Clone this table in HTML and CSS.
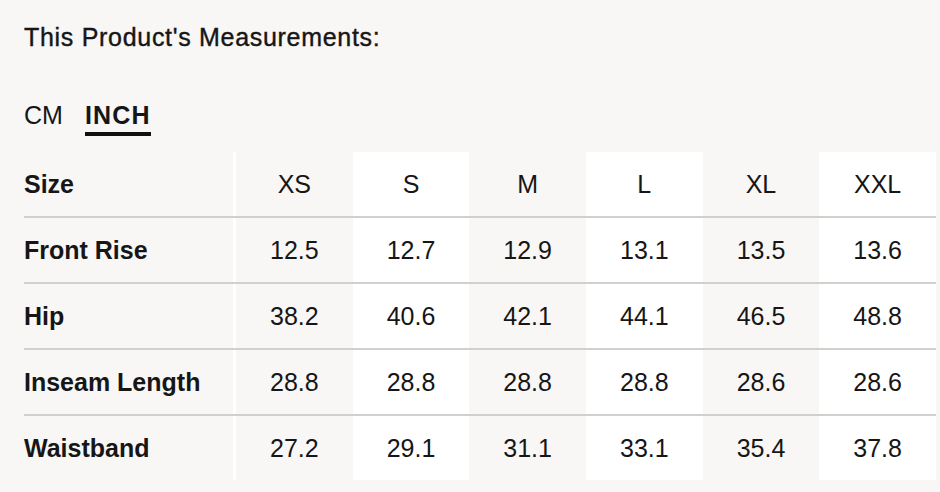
FILE: index.html
```html
<!DOCTYPE html>
<html lang="en">
<head>
<meta charset="utf-8">
<title>Measurements</title>
<link rel="stylesheet" href="styles.css">
</head>
<body>
<section class="measure">
  <h2 class="title">This Product's Measurements:</h2>
  <div class="units">
    <span class="unit">CM</span>
    <span class="unit active">INCH</span>
  </div>
  <div class="table">
    <div class="row head">
      <div class="cell label">Size</div>
      <div class="cell">XS</div>
      <div class="cell alt">S</div>
      <div class="cell">M</div>
      <div class="cell alt">L</div>
      <div class="cell">XL</div>
      <div class="cell alt">XXL</div>
    </div>
    <div class="row">
      <div class="cell label">Front Rise</div>
      <div class="cell">12.5</div>
      <div class="cell alt">12.7</div>
      <div class="cell">12.9</div>
      <div class="cell alt">13.1</div>
      <div class="cell">13.5</div>
      <div class="cell alt">13.6</div>
    </div>
    <div class="row">
      <div class="cell label">Hip</div>
      <div class="cell">38.2</div>
      <div class="cell alt">40.6</div>
      <div class="cell">42.1</div>
      <div class="cell alt">44.1</div>
      <div class="cell">46.5</div>
      <div class="cell alt">48.8</div>
    </div>
    <div class="row">
      <div class="cell label">Inseam Length</div>
      <div class="cell">28.8</div>
      <div class="cell alt">28.8</div>
      <div class="cell">28.8</div>
      <div class="cell alt">28.8</div>
      <div class="cell">28.6</div>
      <div class="cell alt">28.6</div>
    </div>
    <div class="row last">
      <div class="cell label">Waistband</div>
      <div class="cell">27.2</div>
      <div class="cell alt">29.1</div>
      <div class="cell">31.1</div>
      <div class="cell alt">33.1</div>
      <div class="cell">35.4</div>
      <div class="cell alt">37.8</div>
    </div>
  </div>
</section>
</body>
</html>
```

FILE: styles.css
```css
html, body {
  margin: 0;
  padding: 0;
  background: #f8f7f5;
}

body {
  font-family: "Liberation Sans", Arial, sans-serif;
  color: #161616;
}

.measure {
  padding: 22px 4px 0 24px;
}

.title {
  margin: 0;
  font-size: 25px;
  line-height: 30px;
  font-weight: 400;
  letter-spacing: 0.7px;
  -webkit-text-stroke: 0.4px #161616;
}

.units {
  display: flex;
  gap: 22px;
  margin-top: 48px;
}

.unit {
  font-size: 25px;
  line-height: 30px;
  padding-bottom: 2px;
  border-bottom: 4px solid transparent;
}

.unit.active {
  font-weight: 700;
  border-bottom-color: #111;
  letter-spacing: 1.2px;
}

.table {
  margin-top: 16px;
}

.row {
  display: grid;
  grid-template-columns: 212px repeat(6, 1fr);
  height: 64px;
  border-bottom: 2px solid #d2d0cd;
}

.row.last {
  border-bottom: none;
}

.cell {
  display: flex;
  align-items: center;
  justify-content: center;
  font-size: 25px;
  background: #f8f7f5;
}

.cell.alt {
  background: #ffffff;
}

.cell.label {
  justify-content: flex-start;
  font-weight: 700;
  box-shadow: inset -3px 0 0 #ffffff;
}
```
